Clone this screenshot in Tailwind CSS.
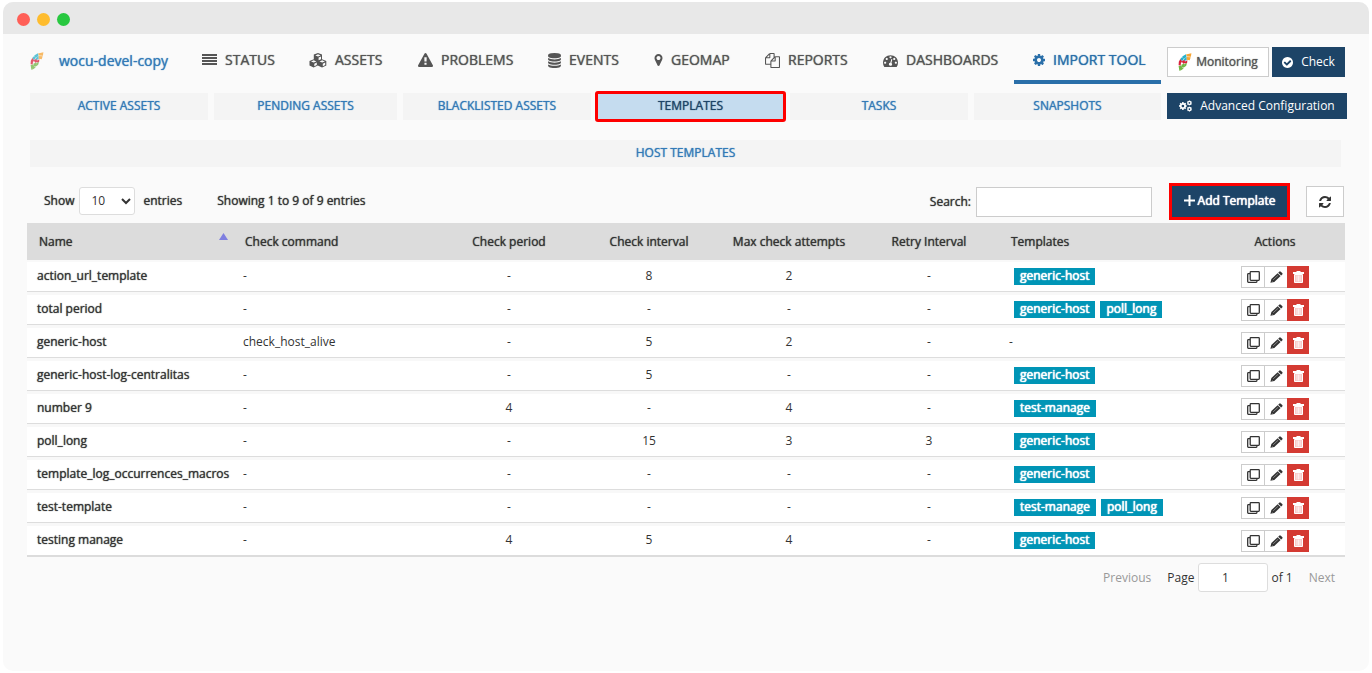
<!DOCTYPE html>
<html lang="en">
<head>
<meta charset="utf-8">
<title>Host templates</title>
<script src="https://cdn.jsdelivr.net/npm/@tailwindcss/browser@4"></script>
</head>
<body class="min-h-screen bg-white p-[2px] pl-[3px] pr-[3px] font-['Open_Sans','Noto_Sans',sans-serif] text-xs text-[#333]">
<svg class="hidden" aria-hidden="true">
  <symbol id="bars" viewBox="0 0 15 12"><path d="M0 0h15v2H0zM0 3h15v2H0zM0 6h15v2H0zM0 9h15v2H0z"/></symbol>
  <symbol id="cubes" viewBox="0 0 18 15"><path fill-rule="evenodd" d="M9 0l4 1.600v4.600l4.300 1.800v4.500l-4.300 2-4.200-2-4.200 2L.5 12.500V8l4.300-1.800V1.600zM9 1.300L6.300 2.400 9 3.500l2.700-1.100zM9.600 4.600v2.700l2.400-1V3.600zM4.700 7.300L2 8.400l2.700 1.200 2.700-1.200zM5.300 10.700v2.600l2.500-1.200V9.600zM13.200 7.300l-2.700 1.100 2.700 1.200 2.700-1.200zM13.800 10.700v2.600l2.400-1.200V9.600z"/></symbol>
  <symbol id="warn" viewBox="0 0 1792 1792"><path d="M1024 1375v-190q0-14-9.500-23.500t-22.500-9.500h-192q-13 0-22.500 9.500t-9.500 23.500v190q0 14 9.500 23.500t22.500 9.500h192q13 0 22.500-9.500t9.500-23.500zm-2-374l18-459q0-12-10-19-13-11-24-11h-220q-11 0-24 11-10 7-10 21l17 457q0 10 10 16.500t24 6.500h185q14 0 23.500-6.500t10.500-16.500zm-14-934l768 1408q35 63-2 126-17 29-46.500 46t-63.500 17h-1536q-34 0-63.500-17t-46.500-46q-37-63-2-126l768-1408q17-31 47-49t65-18 65 18 47 49z"/></symbol>
  <symbol id="db" viewBox="128 0 1536 1792"><path d="M896 768q237 0 443-43t325-127v170q0 69-103 128t-280 93.500-385 34.500-385-34.500-280-93.500-103-128v-170q119 84 325 127t443 43zm0 768q237 0 443-43t325-127v170q0 69-103 128t-280 93.500-385 34.500-385-34.500-280-93.500-103-128v-170q119 84 325 127t443 43zm0-384q237 0 443-43t325-127v170q0 69-103 128t-280 93.500-385 34.500-385-34.500-280-93.500-103-128v-170q119 84 325 127t443 43zm0-1152q208 0 385 34.500t280 93.500 103 128v128q0 69-103 128t-280 93.500-385 34.500-385-34.500-280-93.500-103-128v-128q0-69 103-128t280-93.500 385-34.500z"/></symbol>
  <symbol id="pin" viewBox="384 128 1024 1536"><path d="M1152 640q0-106-75-181t-181-75-181 75-75 181 75 181 181 75 181-75 75-181zm256 0q0 109-33 179l-364 774q-16 33-47.500 52t-67.500 19-67.500-19-46.500-52l-365-774q-33-70-33-179 0-212 150-362t362-150 362 150 150 362z"/></symbol>
  <symbol id="files" viewBox="0 0 1792 1792"><path d="M1696 384q40 0 68 28t28 68v1216q0 40-28 68t-68 28h-960q-40 0-68-28t-28-68v-288h-544q-40 0-68-28t-28-68v-672q0-40 20-88t48-76l408-408q28-28 76-48t88-20h416q40 0 68 28t28 68v328q68-40 128-40h416zm-544 213l-299 299h299v-299zm-640-384l-299 299h299v-299zm196 647l316-316v-416h-384v416q0 40-28 68t-68 28h-416v640h512v-256q0-40 20-88t48-76zm956 804v-1152h-384v416q0 40-28 68t-68 28h-416v640h896z"/></symbol>
  <symbol id="gauge" viewBox="0 128 1792 1536"><path d="M384 1152q0-53-37.500-90.500t-90.500-37.500-90.500 37.500-37.500 90.500 37.500 90.500 90.500 37.500 90.500-37.500 37.500-90.500zm192-448q0-53-37.500-90.500t-90.500-37.500-90.500 37.500-37.500 90.500 37.500 90.500 90.500 37.500 90.500-37.500 37.500-90.500zm428 481l101-382q6-26-7.500-48.500t-38.500-29.500-48 6.500-30 39.500l-101 382q-60 5-107 43.500t-63 98.500q-20 77 20 146t117 89 146-20 89-117q16-60-6-117t-72-91zm660-33q0-53-37.500-90.500t-90.500-37.500-90.500 37.500-37.500 90.500 37.500 90.500 90.500 37.500 90.500-37.500 37.500-90.500zm-640-640q0-53-37.500-90.500t-90.500-37.500-90.500 37.500-37.500 90.500 37.500 90.500 90.500 37.500 90.500-37.500 37.500-90.500zm448 192q0-53-37.500-90.500t-90.500-37.500-90.500 37.500-37.500 90.500 37.500 90.500 90.500 37.500 90.500-37.500 37.500-90.500zm320 448q0 261-141 483-19 29-54 29h-1402q-35 0-54-29-141-221-141-483 0-182 71-348t191-286 286-191 348-71 348 71 286 191 191 286 71 348z"/></symbol>
  <symbol id="cog" viewBox="128 128 1536 1536"><path d="M1152 896q0-106-75-181t-181-75-181 75-75 181 75 181 181 75 181-75 75-181zm512-109v222q0 12-8 23t-20 13l-185 28q-19 54-39 91 35 50 107 138 10 12 10 25t-9 23q-27 37-99 108t-94 71q-12 0-26-9l-138-108q-44 23-91 38-16 136-29 186-7 28-36 28h-222q-14 0-24.500-8.500t-11.500-21.500l-28-184q-49-16-90-37l-141 107q-10 9-25 9-14 0-25-11-126-114-165-168-7-10-7-23 0-12 8-23 15-21 51-66.500t54-70.500q-27-50-41-99l-183-27q-13-2-21-12.500t-8-23.500v-222q0-12 8-23t19-13l186-28q14-46 39-92-40-57-107-138-10-12-10-24 0-10 9-23 26-36 98.500-107.500t94.500-71.500q13 0 26 10l138 107q44-23 91-38 16-136 29-186 7-28 36-28h222q14 0 24.500 8.500t11.500 21.500l28 184q49 16 90 37l142-107q9-9 24-9 13 0 25 10 129 119 165 170 7 8 7 22 0 12-8 23-15 21-51 66.500t-54 70.500q26 50 41 98l183 28q13 2 21 12.500t8 23.500z"/></symbol>
  <symbol id="cogs" viewBox="0 0 15 13"><use href="#cog" x="0" y="2" width="9" height="9"/><use href="#cog" x="9" y="0" width="6" height="6"/><use href="#cog" x="9" y="7" width="6" height="6"/></symbol>
  <symbol id="check" viewBox="128 128 1536 1536"><path d="M1412 734q0-28-18-46l-91-90q-19-19-45-19t-45 19l-408 407-226-226q-19-19-45-19t-45 19l-91 90q-18 18-18 46 0 27 18 45l362 362q19 19 45 19 27 0 46-19l543-543q18-18 18-45zm252 162q0 209-103 385.500t-279.500 279.500-385.500 103-385.500-103-279.500-279.500-103-385.500 103-385.500 279.500-279.500 385.500-103 385.500 103 279.500 279.500 103 385.500z"/></symbol>
  <symbol id="refresh" viewBox="128 128 1536 1536"><path d="M1639 1056q0 5-1 7-64 268-268 434.500t-478 166.500q-146 0-282.500-55t-243.500-157l-129 129q-19 19-45 19t-45-19-19-45v-448q0-26 19-45t45-19h448q26 0 45 19t19 45-19 45l-137 137q71 66 161 102t187 36q134 0 250-65t186-179q11-17 53-117 8-23 30-23h192q13 0 22.500 9.500t9.500 22.500zm25-800v448q0 26-19 45t-45 19h-448q-26 0-45-19t-19-45 19-45l138-138q-148-137-349-137-134 0-250 65t-186 179q-11 17-53 117-8 23-30 23h-199q-13 0-22.500-9.500t-9.500-22.500v-7q65-268 270-434.500t480-166.500q146 0 284 55.500t245 156.500l130-129q19-19 45-19t45 19 19 45z"/></symbol>
  <symbol id="plus" viewBox="0 0 11 11"><path d="M4.500 0h2v4.500H11v2H6.500V11h-2V6.500H0v-2h4.500z"/></symbol>
  <symbol id="clone" viewBox="0 0 13 12"><path fill="none" stroke="currentColor" stroke-width="1.300" d="M3.200 1.400q0-.7.7-.7h7.700q.7 0 .7.700v7.200q0 .7-.7.700H3.900q-.7 0-.7-.7zM3 2.700H1.400q-.7 0-.7.700v7.200q0 .7.700.7h7.800q.7 0 .7-.7V9.500"/></symbol>
  <symbol id="pencil" viewBox="0 0 13 12"><path d="M9.200.7q.7-.8 1.600 0l1.400 1.300q.7.700 0 1.500l-1 1L8.200 1.700z"/><path d="M7.600 2.300l3 2.800-6.300 5.800L.4 11.800l1-3.700z"/><path d="M3.200 8.800l5-4.600M2 10.200l.6.500" stroke="#aaa" stroke-width=".7"/></symbol>
  <symbol id="trash" viewBox="0 0 11 12"><path fill="#fff" d="M3.500 0h4v1H11v2H0V1h3.500z"/><path fill="#f8c8c6" stroke="#fff" d="M1.500 3.500h8v8h-8z"/><path stroke="#fff" stroke-width=".7" d="M4 4.500v6M5.500 4.500v6M7 4.500v6"/></symbol>
  <symbol id="leaf" viewBox="0 0 14 18"><path fill="#f7a535" d="M8 1.400L13.400.3l-.5 3.400-4-.3zM8.400 4l4.300.3-1 3-3.300-.5z"/><path fill="#29b1cb" d="M4.200 3.400l3.700-2.200.6 2.500L5.700 6zM2.200 6.100l2-2.200 1.500 2.400L4 8.200zM6 6.300l2.400-2.200.2 2.900-2.400 1.300z"/><path fill="#d9213b" d="M.7 8.900l1.600-2.800L4 8.300l-1.300 2.600zM3.800 8.600l2.300-1.900 1 2.200-1.800 2.200zM.6 12.300l.2-3.400 1.900 2.200.2 1.500zM6.600 8.700l2.800-1.500-.3 2.900-2.500.7z"/><path fill="#72b545" d="M.6 13l2.900-.4.7 2.700-2.800 2.600zM3.500 11.600l2.800-.9.300 3-2.500 1.100zM6.500 11l2.500-.9-.8 2.600-1.600 1.300zM4 15.200l2.500-1-2.200 2.300-2.500 1.400z"/></symbol>
</svg>

<div class="flex min-h-[669px] flex-col overflow-hidden rounded-[10px] bg-[#fafafa]">
  <div class="flex h-8 items-center gap-[7px] bg-[#e8e8e8] pl-[14px] pt-[2px]">
    <span class="size-[13px] rounded-full bg-[#ff5f57]"></span>
    <span class="size-[13px] rounded-full bg-[#febc2e]"></span>
    <span class="size-[13px] rounded-full bg-[#28c840]"></span>
  </div>

  <header class="flex gap-[6px] pl-[27px] pr-[22px] pt-[7px] [text-shadow:0_0_1px_currentColor]">
    <div class="flex-1">
      <nav class="grid h-[43px] grid-cols-[153fr_108fr_109fr_130fr_106fr_111fr_118fr_149fr_147fr] whitespace-nowrap text-sm text-[#555]">
        <a href="#" class="flex h-10 items-center gap-[15px] text-[#337ab7]"><svg class="h-[18px] w-[14px] opacity-75"><use href="#leaf"/></svg>wocu-devel-copy</a>
        <a href="#" class="flex h-[38px] items-center gap-2 pl-[19px]"><svg class="h-3 w-[15px] fill-current"><use href="#bars"/></svg>STATUS</a>
        <a href="#" class="flex h-[38px] items-center gap-2 pl-[18px]"><svg class="h-[15px] w-[18px] fill-current"><use href="#cubes"/></svg>ASSETS</a>
        <a href="#" class="flex h-[38px] items-center gap-2 pl-[18px]"><svg class="size-[15px] fill-current"><use href="#warn"/></svg>PROBLEMS</a>
        <a href="#" class="flex h-[38px] items-center gap-2 pl-[18px]"><svg class="h-[15px] w-[13px] fill-current"><use href="#db"/></svg>EVENTS</a>
        <a href="#" class="flex h-[38px] items-center gap-2 pl-[18px]"><svg class="h-3 w-[9px] fill-current"><use href="#pin"/></svg>GEOMAP</a>
        <a href="#" class="flex h-[38px] items-center gap-2 pl-[18px]"><svg class="size-[15px] fill-current"><use href="#files"/></svg>REPORTS</a>
        <a href="#" class="flex h-[38px] items-center gap-2 pl-[18px]"><svg class="h-[13px] w-[15px] fill-current"><use href="#gauge"/></svg>DASHBOARDS</a>
        <a href="#" class="flex h-[43px] items-center gap-2 border-b-4 border-[#2a6fa9] pb-[1px] pl-[19px] text-[#2a6fa9]"><svg class="size-3 fill-current"><use href="#cog"/></svg>IMPORT TOOL</a>
      </nav>
      <nav class="mt-[9px] grid grid-cols-[178fr_183fr_188fr_187fr_178fr_187fr] gap-[6px] text-center leading-[25px] text-[#337ab7]">
        <a href="#" class="h-[27px] bg-[#f4f4f4]">ACTIVE ASSETS</a>
        <a href="#" class="h-[27px] bg-[#f4f4f4]">PENDING ASSETS</a>
        <a href="#" class="h-[27px] bg-[#f4f4f4]">BLACKLISTED ASSETS</a>
        <a href="#" class="h-[27px] rounded-[1px] bg-[#c5dcef] text-[#1d4467] outline-[3px] -outline-offset-1 outline-[#fe0000]">TEMPLATES</a>
        <a href="#" class="h-[27px] bg-[#f4f4f4]">TASKS</a>
        <a href="#" class="h-[27px] bg-[#f4f4f4]">SNAPSHOTS</a>
      </nav>
    </div>
    <div class="w-[180px] pt-[6px] [text-shadow:0_0_1px_currentColor,0_0_1px_currentColor]">
      <div class="flex gap-[3px]">
        <button class="flex h-[30px] w-[102px] items-center justify-center gap-1 border border-[#ccc] bg-white text-[#555] [text-shadow:0_0_1px_currentColor]"><svg class="h-[18px] w-[14px]"><use href="#leaf"/></svg>Monitoring</button>
        <button class="flex h-[30px] w-[73px] items-center justify-center gap-2 bg-[#1d4467] text-white"><svg class="size-[11px] fill-current"><use href="#check"/></svg>Check</button>
      </div>
      <button class="mt-4 flex h-[26px] w-full items-center justify-center gap-2 bg-[#1d4467] text-white"><svg class="h-3 w-[13px] fill-current"><use href="#cogs"/></svg>Advanced Configuration</button>
    </div>
  </header>

  <main class="px-6">
    <div class="ml-[3px] mr-1 mt-5 h-[27px] bg-[#f4f4f4] text-center leading-[25px] [text-shadow:0_0_1px_currentColor]"><a href="#" class="text-[#337ab7]">HOST TEMPLATES</a></div>

    <div class="flex h-14 items-center pl-[17px] pt-[13px] [text-shadow:0_0_1px_currentColor]">
      <div class="flex items-center pb-[2px]">
        <label for="len">Show</label>
        <select id="len" class="mx-[5px] h-7 w-14 rounded-[3px] border border-[#ddd] bg-white pl-[7px] [text-shadow:none]"><option>10</option></select>
        <span class="ml-[3px]">entries</span>
        <span class="ml-[35px]">Showing 1 to 9 of 9 entries</span>
      </div>
      <label for="search" class="ml-auto">Search:</label>
      <input id="search" type="text" class="ml-[5px] h-[30px] w-44 border border-[#ccc] bg-white px-2">
      <button class="ml-5 flex h-[31px] w-[115px] items-center justify-center gap-[3px] bg-[#1d4467] pb-[2px] text-white outline-[3px] outline-[#fe0000] [text-shadow:0_0_1px_currentColor,0_0_1px_currentColor]"><svg class="size-[11px] fill-current"><use href="#plus"/></svg>Add Template</button>
      <button aria-label="Refresh" class="ml-[19px] mr-[1px] flex h-[31px] w-[38px] items-center justify-center border border-[#ccc] bg-white"><svg class="size-3 fill-current"><use href="#refresh"/></svg></button>
    </div>

    <table class="w-full table-fixed border-collapse text-center">
      <colgroup><col class="w-[206px]"><col class="w-[206px]"><col><col><col><col><col class="w-[206px]"><col></colgroup>
      <thead>
        <tr class="h-[39px] bg-[#dcdcdc] shadow-[inset_0_-2px_0_#f9f9f9] [&>th]:pb-[2px] [&>th]:font-normal [&>th]:[text-shadow:0_0_1px_currentColor]">
          <th class="pl-3 text-left"><span class="flex items-center justify-between pr-[5px]">Name<svg class="mb-[10px] h-[7px] w-[9px] fill-[#7f7fe0]" viewBox="0 0 9 7"><path d="M4.500 0L9 7H0z"/></svg></span></th>
          <th class="pl-3 text-left">Check command</th><th>Check period</th><th>Check interval</th><th>Max check attempts</th><th>Retry Interval</th><th class="pl-3 text-left">Templates</th><th>Actions</th>
        </tr>
      </thead>
      <tbody id="rows"></tbody>
    </table>

    <div class="mt-[6px] flex items-center justify-end pr-[10px]">
      <button class="text-[#999]">Previous</button>
      <label for="page" class="ml-4">Page</label>
      <input id="page" type="text" value="1" class="ml-1 mr-[3px] h-[29px] w-[70px] rounded-[3px] border border-[#ddd] bg-white pr-4 text-center">
      <span>of 1</span>
      <button class="ml-4 text-[#999]">Next</button>
    </div>
  </main>
</div>

<script>
const data = [
  ['action_url_template','-','-','8','2','-',['generic-host']],
  ['total period','-','-','-','-','-',['generic-host','poll_long']],
  ['generic-host','check_host_alive','-','5','2','-',[]],
  ['generic-host-log-centralitas','-','-','5','-','-',['generic-host']],
  ['number 9','-','4','-','4','-',['test-manage']],
  ['poll_long','-','-','15','3','3',['generic-host']],
  ['template_log_occurrences_macros','-','-','-','-','-',['generic-host']],
  ['test-template','-','-','-','-','-',['test-manage','poll_long']],
  ['testing manage','-','4','5','4','-',['generic-host']]
];
const tag = t => `<span class="h-[17px] bg-[#0095b6] px-[6px] leading-[15px] text-white [text-shadow:0_0_1px_currentColor,0_0_1px_currentColor]">${t}</span>`;
document.getElementById('rows').innerHTML = data.map(([name, cmd, ...rest]) => {
  const tags = rest.pop();
  return `<tr class="h-[33px] bg-white shadow-[inset_0_-3px_0_#f8f8f8,inset_0_-4px_0_#dddddd] last:h-[31px] last:shadow-[inset_0_-2px_0_#dcdcdc] [&>td]:pb-[5px] last:[&>td]:pb-[3px]">
    <td class="whitespace-nowrap pl-[10px] text-left [text-shadow:0_0_1px_currentColor]">${name}</td>
    <td class="pl-[10px] text-left">${cmd}</td>
    ${rest.map(v => `<td>${v}</td>`).join('')}
    <td class="text-left">${tags.length ? `<span class="flex gap-[5px] pl-[15px]">${tags.map(tag).join('')}</span>` : '<span class="pl-[10px]">-</span>'}</td>
    <td><span class="flex justify-center pt-[2px]">
      <button aria-label="Clone" class="flex h-[22px] w-6 items-center justify-center border border-[#ccc] bg-white"><svg class="h-3 w-[13px]"><use href="#clone"/></svg></button>
      <button aria-label="Edit" class="flex h-[22px] w-[22px] items-center justify-center border-y border-[#ccc] bg-white"><svg class="h-3 w-[13px] fill-current"><use href="#pencil"/></svg></button>
      <button aria-label="Delete" class="flex h-[22px] w-[22px] items-center justify-center bg-[#d43a32]"><svg class="h-3 w-[11px]"><use href="#trash"/></svg></button>
    </span></td></tr>`;
}).join('');
</script>
</body>
</html>
